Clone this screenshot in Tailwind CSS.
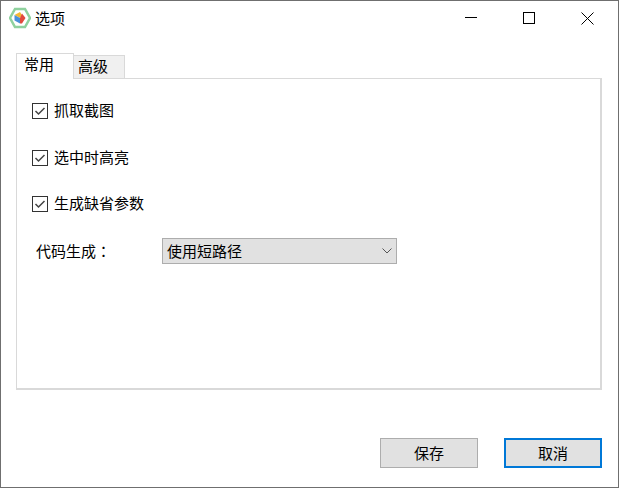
<!DOCTYPE html>
<html lang="en">
<head>
    <meta charset="UTF-8">
    <title>选项</title>
    <script src="https://cdn.jsdelivr.net/npm/@tailwindcss/browser@4"></script>
</head>
<body class="bg-white">
    <div class="w-[619px] h-[488px] overflow-hidden flex flex-col bg-white border border-[#6f6f6f] text-black text-[15px] leading-[20px] font-['Noto_Sans_CJK_SC','Liberation_Sans',sans-serif]">
        <header class="h-[37px] pb-[3px] flex items-center shrink-0">
            <svg class="ml-[8px] w-[22px] h-[22px]" viewBox="0 0 22 22">
                <path d="M6 2h10l5 9-5 9H6l-5-9z" fill="none" stroke="#8fd19e" stroke-width="2.500"/>
                <path d="M5.500 8l5.500-3 2 3-2 3z" fill="#f5b733"/>
                <path d="M5.500 8l5.500 3v5.500l-5.500-3z" fill="#4a90d9"/>
                <path d="M13 6.500l3.500 4.500-3.500 5.500h-2V11z" fill="#e2483d"/>
            </svg>
            <span class="ml-[4px]">选项</span>
            <div class="ml-auto flex h-full mr-[1px]">
                <div class="w-[58px] flex items-center justify-center">
                    <svg class="w-[12px] h-[12px]" viewBox="0 0 12 12"><path d="M0 5.500h12" stroke="#000" fill="none"/></svg>
                </div>
                <div class="w-[58px] flex items-center justify-center">
                    <svg class="w-[12px] h-[12px]" viewBox="0 0 12 12"><rect x="0.500" y="0.500" width="11" height="11" stroke="#000" fill="none"/></svg>
                </div>
                <div class="w-[59px] flex items-center justify-center">
                    <svg class="w-[13px] h-[13px]" viewBox="0 0 13 13"><path d="M0.500 0.500l12 12M12.500 0.500l-12 12" stroke="#000" fill="none"/></svg>
                </div>
            </div>
        </header>

        <main class="mx-[15px] mt-[15px] w-[586px]">
            <div class="flex items-end h-[26px] relative z-10">
                <div class="w-[58px] h-[26px] bg-white border border-b-0 border-[#d9d9d9] pl-[7px]">常用</div>
                <div class="w-[51px] h-[23px] mb-[1px] bg-[#f0f0f0] border border-l-0 border-b-0 border-[#d9d9d9] pl-[4px]">高级</div>
            </div>
            <section class="-mt-[1px] h-[312px] bg-white border border-[#d9d9d9] border-r-[2px] border-b-[2px] pl-[15px] pt-[22px]">
                <label class="flex items-center h-[20px] gap-[6px]">
                    <svg class="w-[16px] h-[16px]" viewBox="0 0 16 16"><rect x="0.500" y="0.500" width="15" height="15" fill="#fff" stroke="#333"/><path d="M3.500 8l3 3L12.500 5" fill="none" stroke="#444" stroke-width="1.500"/></svg>
                    <span class="mb-[2px]">抓取截图</span>
                </label>
                <label class="flex items-center h-[20px] gap-[6px] mt-[27px]">
                    <svg class="w-[16px] h-[16px]" viewBox="0 0 16 16"><rect x="0.500" y="0.500" width="15" height="15" fill="#fff" stroke="#333"/><path d="M3.500 8l3 3L12.500 5" fill="none" stroke="#444" stroke-width="1.500"/></svg>
                    <span class="mb-[2px]">选中时高亮</span>
                </label>
                <label class="flex items-center h-[20px] gap-[6px] mt-[26px]">
                    <svg class="w-[16px] h-[16px]" viewBox="0 0 16 16"><rect x="0.500" y="0.500" width="15" height="15" fill="#fff" stroke="#333"/><path d="M3.500 8l3 3L12.500 5" fill="none" stroke="#444" stroke-width="1.500"/></svg>
                    <span class="mb-[2px]">生成缺省参数</span>
                </label>
                <div class="flex items-center mt-[24px] h-[26px]">
                    <span class="ml-[4px] w-[126px]">代码生成<span class="font-['Noto_Sans_CJK_TC',sans-serif]">：</span></span>
                    <div class="w-[235px] h-[26px] flex items-center bg-[#e1e1e1] border border-[#adadad] pl-[4px]">
                        <span>使用短路径</span>
                        <svg class="ml-auto mr-[4px] w-[10px] h-[6px]" viewBox="0 0 10 6"><path d="M0.500 0.500L5 5l4.500-4.500" fill="none" stroke="#555"/></svg>
                    </div>
                </div>
            </section>
        </main>

        <footer class="flex justify-end gap-[26px] mt-[48px] mr-[16px]">
            <button class="w-[98px] h-[30px] bg-[#e1e1e1] border border-[#adadad]">保存</button>
            <button class="w-[98px] h-[30px] bg-[#e1e1e1] border-2 border-[#0078d7]">取消</button>
        </footer>
    </div>
</body>
</html>
